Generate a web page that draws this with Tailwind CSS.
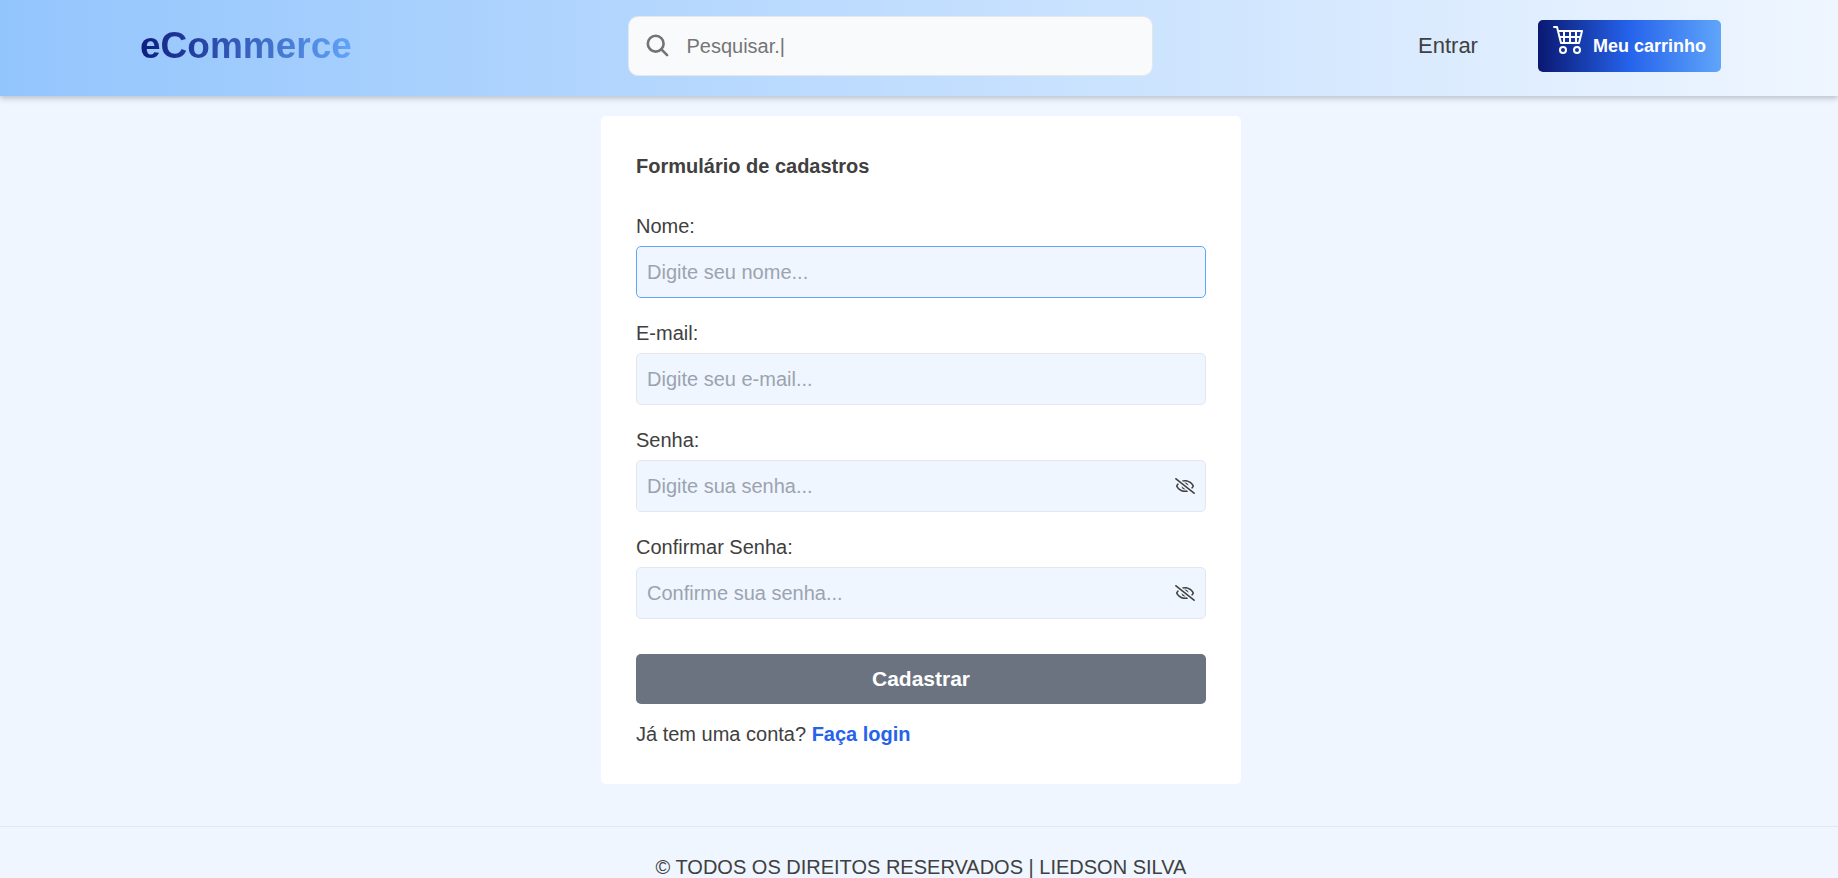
<!DOCTYPE html>
<html lang="pt-BR">
<head>
<meta charset="utf-8">
<meta name="viewport" content="width=device-width, initial-scale=1">
<title>eCommerce - Cadastro</title>
<script src="https://cdn.jsdelivr.net/npm/@tailwindcss/browser@4"></script>
</head>
<body class="flex min-h-screen flex-col overflow-x-hidden bg-[#eff6ff] font-['Liberation_Sans',Arial,sans-serif] text-xl leading-[30px] text-[#404040]">
<header class="bg-linear-to-r/srgb from-[#93c5fd] to-[#eff6ff] pt-4 pb-5 shadow-[0_4px_6px_rgba(0,0,0,0.1),0_2px_4px_rgba(0,0,0,0.1)]">
  <div class="flex items-center justify-between pr-[117px] pl-[140px]">
    <a href="#" class="mr-3 bg-linear-to-r/srgb from-[#0f1d80] to-[#60a5fa] bg-clip-text text-[37px] leading-[60px] font-bold text-transparent">eCommerce</a>
    <form role="search" class="flex h-[60px] w-[525px] items-center gap-4 rounded-[10px] border border-[#e5e7eb] bg-[#f9fafb] pr-4 pl-[17px]">
      <svg class="size-6 shrink-0 text-[#737373]" viewBox="0 0 24 24" fill="none" stroke="currentColor" stroke-width="2.6" stroke-linecap="round" aria-hidden="true"><circle cx="9.7" cy="9.7" r="7.9"/><path d="M15.4 15.4l5.7 5.7"/></svg>
      <input type="search" aria-label="Pesquisar" placeholder="Pesquisar.|" class="min-w-0 flex-1 bg-transparent outline-none placeholder:text-[#757575]">
    </form>
    <nav class="flex items-center gap-[60px]">
      <a href="#" class="text-[22px]">Entrar</a>
      <button type="button" class="flex h-[52px] items-center gap-2 rounded-[5px] bg-linear-to-r/srgb from-[#0a1872] via-[#2563eb] to-[#60a5fa] px-[15px] text-lg font-bold text-white">
        <svg class="mb-4 size-8" viewBox="0 0 16 16" fill="currentColor" aria-hidden="true"><path d="M0 2.5A.5.5 0 0 1 .5 2H2a.5.5 0 0 1 .485.379L2.89 4H14.5a.5.5 0 0 1 .485.621l-1.5 6A.5.5 0 0 1 13 11H4a.5.5 0 0 1-.485-.379L1.61 3H.5a.5.5 0 0 1-.5-.5M3.14 5l.5 2H5V5zM6 5v2h2V5zm3 0v2h2V5zm3 0v2h1.36l.5-2zm1.11 3H12v2h.61zM11 8H9v2h2zM8 8H6v2h2zM5 8H3.89l.5 2H5zm0 5a1 1 0 1 0 0 2 1 1 0 0 0 0-2m-2 1a2 2 0 1 1 4 0 2 2 0 0 1-4 0m9-1a1 1 0 1 0 0 2 1 1 0 0 0 0-2m-2 1a2 2 0 1 1 4 0 2 2 0 0 1-4 0"/></svg>
        Meu carrinho
      </button>
    </nav>
  </div>
</header>

<main class="flex justify-center pt-5 pr-4 pb-[42px] pl-5">
  <form class="w-full max-w-[640px] rounded-[5px] bg-white p-[35px]">
    <h1 class="mb-[30px] font-bold">Formulário de cadastros</h1>
    <div class="flex flex-col gap-5">
      <div class="flex flex-col gap-[5px]">
        <label for="nome">Nome:</label>
        <input id="nome" type="text" placeholder="Digite seu nome..." class="h-[52px] rounded-[5px] border border-[#60a5fa] bg-[#eff6ff] px-[10px] outline-none placeholder:text-[#9ca3af]">
      </div>
      <div class="flex flex-col gap-[5px]">
        <label for="email">E-mail:</label>
        <input id="email" type="email" placeholder="Digite seu e-mail..." class="h-[52px] rounded-[5px] border border-[#e5e7eb] bg-[#eff6ff] px-[10px] outline-none placeholder:text-[#9ca3af]">
      </div>
      <div class="flex flex-col gap-[5px]">
        <label for="senha">Senha:</label>
        <div class="flex h-[52px] items-center rounded-[5px] border border-[#e5e7eb] bg-[#eff6ff] px-[10px]">
          <input id="senha" type="password" placeholder="Digite sua senha..." class="min-w-0 flex-1 bg-transparent outline-none placeholder:text-[#9ca3af]">
          <button type="button" aria-label="Mostrar senha">
            <svg class="h-4 w-5" viewBox="0 0 640 512" fill="currentColor" aria-hidden="true"><path d="M634 471L36 3.51A16 16 0 0 0 13.51 6l-10 12.49A16 16 0 0 0 6 41l598 467.49a16 16 0 0 0 22.49-2.49l10-12.49A16 16 0 0 0 634 471zM296.79 146.47l134.79 105.38C429.36 191.91 380.48 144 320 144a112.26 112.26 0 0 0-23.21 2.47zm46.42 219.07L208.42 260.16C210.65 320.09 259.53 368 320 368a113 113 0 0 0 23.21-2.46zM320 112c98.65 0 189.09 55 237.93 144a285.53 285.53 0 0 1-44 60.2l37.74 29.5a333.7 333.7 0 0 0 52.9-75.11 32.35 32.35 0 0 0 0-29.19C550.29 135.59 442.93 64 320 64c-36.7 0-71.71 7-104.63 18.81l46.41 36.29c18.94-4.3 38.34-7.1 58.22-7.1zm0 288c-98.65 0-189.08-55-237.93-144a285.47 285.47 0 0 1 44.05-60.19l-37.74-29.5a333.6 333.6 0 0 0-52.89 75.1 32.35 32.35 0 0 0 0 29.19C89.72 376.41 197.08 448 320 448c36.7 0 71.71-7.05 104.63-18.81l-46.41-36.28C359.28 397.2 339.89 400 320 400z"/></svg>
          </button>
        </div>
      </div>
      <div class="flex flex-col gap-[5px]">
        <label for="confirmar">Confirmar Senha:</label>
        <div class="flex h-[52px] items-center rounded-[5px] border border-[#e5e7eb] bg-[#eff6ff] px-[10px]">
          <input id="confirmar" type="password" placeholder="Confirme sua senha..." class="min-w-0 flex-1 bg-transparent outline-none placeholder:text-[#9ca3af]">
          <button type="button" aria-label="Mostrar confirmação da senha">
            <svg class="h-4 w-5" viewBox="0 0 640 512" fill="currentColor" aria-hidden="true"><path d="M634 471L36 3.51A16 16 0 0 0 13.51 6l-10 12.49A16 16 0 0 0 6 41l598 467.49a16 16 0 0 0 22.49-2.49l10-12.49A16 16 0 0 0 634 471zM296.79 146.47l134.79 105.38C429.36 191.91 380.48 144 320 144a112.26 112.26 0 0 0-23.21 2.47zm46.42 219.07L208.42 260.16C210.65 320.09 259.53 368 320 368a113 113 0 0 0 23.21-2.46zM320 112c98.65 0 189.09 55 237.93 144a285.53 285.53 0 0 1-44 60.2l37.74 29.5a333.7 333.7 0 0 0 52.9-75.11 32.35 32.35 0 0 0 0-29.19C550.29 135.59 442.93 64 320 64c-36.7 0-71.71 7-104.63 18.81l46.41 36.29c18.94-4.3 38.34-7.1 58.22-7.1zm0 288c-98.65 0-189.08-55-237.93-144a285.47 285.47 0 0 1 44.05-60.19l-37.74-29.5a333.6 333.6 0 0 0-52.89 75.1 32.35 32.35 0 0 0 0 29.19C89.72 376.41 197.08 448 320 448c36.7 0 71.71-7.05 104.63-18.81l-46.41-36.28C359.28 397.2 339.89 400 320 400z"/></svg>
          </button>
        </div>
      </div>
    </div>
    <button type="submit" class="mt-[35px] h-[50px] w-full rounded-[5px] bg-[#6b7280] text-[21px] font-bold text-white">Cadastrar</button>
    <p class="mt-[15px]">Já tem uma conta? <a href="#" class="font-bold text-[#2563eb]">Faça login</a></p>
  </form>
</main>

<footer class="border-t border-[#e5e7eb] py-[25px] pl-1 text-center">
  <p>© TODOS OS DIREITOS RESERVADOS | LIEDSON SILVA</p>
</footer>
</body>
</html>
